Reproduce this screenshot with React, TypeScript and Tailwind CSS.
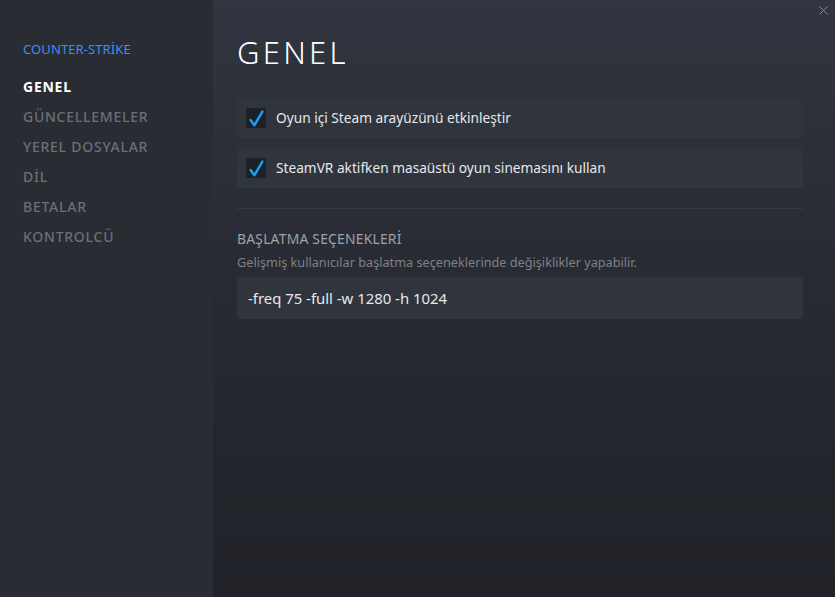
import { X } from "lucide-react";

const NAV = ["GENEL", "GÜNCELLEMELER", "YEREL DOSYALAR", "DİL", "BETALAR", "KONTROLCÜ"];

function CheckRow({ label }: { label: string }) {
  return (
    <div className="flex items-center h-10 px-[9px] gap-[10px] rounded-[3px] bg-[#30343d]">
      <span className="flex items-center justify-center w-5 h-5 rounded-[2px] bg-[#1d2027]">
        <svg width="15" height="17" viewBox="0 0 15 17" fill="none">
          <path d="M1.6 10 L5.4 15.2 L13.4 1.6" stroke="#1a9fff" strokeWidth="2.4" strokeLinecap="round" strokeLinejoin="round" />
        </svg>
      </span>
      <span className="text-[13.7px] text-[#e6e8ea]">{label}</span>
    </div>
  );
}

export default function App() {
  return (
    <div
      className="flex w-[835px] h-[597px] overflow-hidden"
      style={{ fontFamily: '"Noto Sans", "Open Sans", sans-serif' }}
    >
      {/* Sidebar */}
      <div className="w-[213px] shrink-0 bg-[#292c33] pt-[40px] pl-[23px]">
        <div className="text-[13px] text-[#3d8ff0] tracking-[0.1px] leading-[18px]">COUNTER-STRİKE</div>
        <div className="mt-[20px] flex flex-col">
          {NAV.map((n, i) => (
            <div
              key={n}
              className={`h-[30px] leading-[18px] text-[14px] tracking-[0.75px] ${
                i === 0 ? "text-white font-bold" : "text-[#6c6f76] font-medium"
              }`}
            >
              {n}
            </div>
          ))}
        </div>
      </div>

      {/* Main */}
      <div className="relative flex-1 bg-gradient-to-b from-[#31353f] via-[#272a31] to-[#202228] pl-[24px] pr-[32px]">
        <button className="absolute right-[4px] top-[3px] text-[#8a8f98]">
          <X size={15} strokeWidth={1.5} />
        </button>

        <h1 className="mt-[30px] text-[31px] leading-[44px] font-light tracking-[3.3px] text-white">GENEL</h1>

        <div className="mt-[24px] flex flex-col gap-[10px]">
          <CheckRow label="Oyun içi Steam arayüzünü etkinleştir" />
          <CheckRow label="SteamVR aktifken masaüstü oyun sinemasını kullan" />
        </div>

        <div className="mt-[20px] h-px bg-[#363a43]" />

        <div className="mt-[20px] text-[13.9px] leading-[20px] text-[#9ea2a9] tracking-[0.2px]">BAŞLATMA SEÇENEKLERİ</div>
        <div className="mt-[4px] text-[12.7px] leading-[18px] text-[#7d8189]">
          Gelişmiş kullanıcılar başlatma seçeneklerinde değişiklikler yapabilir.
        </div>
        <div className="mt-[6px] h-[42px] flex items-center px-[11px] rounded-[3px] bg-[#30343d] text-[14.9px] text-[#e6e8ea]">
          -freq 75 -full -w 1280 -h 1024
        </div>
      </div>
    </div>
  );
}
